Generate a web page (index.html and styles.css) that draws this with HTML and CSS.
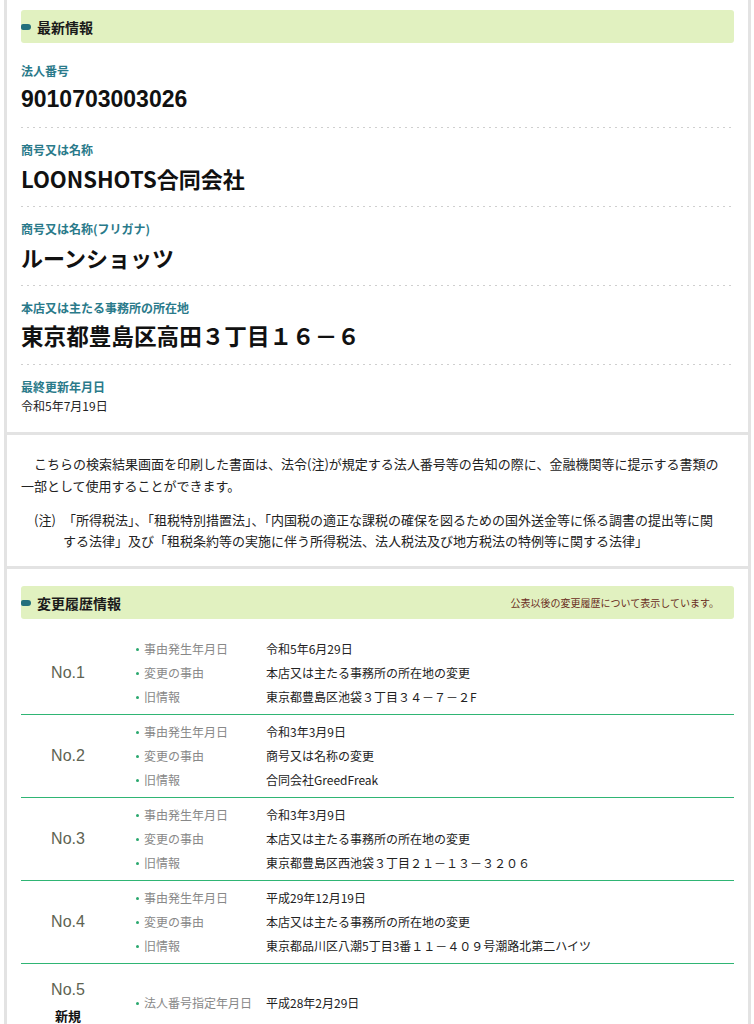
FILE: index.html
```html
<!DOCTYPE html>
<html lang="ja">
<head>
<meta charset="utf-8">
<title>法人番号</title>
<link rel="stylesheet" href="styles.css">
</head>
<body>
<div class="wrap">
  <section class="panel latest">
    <h2 class="bar"><span class="mark"></span>最新情報</h2>
    <div class="item">
      <div class="label">法人番号</div>
      <div class="value num">9010703003026</div>
    </div>
    <div class="item">
      <div class="label">商号又は名称</div>
      <div class="value">LOONSHOTS合同会社</div>
    </div>
    <div class="item">
      <div class="label">商号又は名称(フリガナ)</div>
      <div class="value">ルーンショッツ</div>
    </div>
    <div class="item">
      <div class="label">本店又は主たる事務所の所在地</div>
      <div class="value addr">東京都豊島区高田３丁目１６－６</div>
    </div>
    <div class="item last">
      <div class="label">最終更新年月日</div>
      <div class="small">令和5年7月19日</div>
    </div>
  </section>

  <section class="panel notice">
    <p class="lead">こちらの検索結果画面を印刷した書面は、法令(注)が規定する法人番号等の告知の際に、金融機関等に提示する書類の一部として使用することができます。</p>
    <div class="note">
      <span class="note-mark">(注)</span>
      <p class="note-text">「所得税法」、「租税特別措置法」、「内国税の適正な課税の確保を図るための国外送金等に係る調書の提出等に関する法律」及び「租税条約等の実施に伴う所得税法、法人税法及び地方税法の特例等に関する法律」</p>
    </div>
  </section>

  <section class="panel history">
    <h2 class="bar"><span class="mark"></span>変更履歴情報<span class="bar-note">公表以後の変更履歴について表示しています。</span></h2>

    <div class="row">
      <div class="no">No.1</div>
      <ul class="facts">
        <li><span class="k">事由発生年月日</span><span class="v">令和5年6月29日</span></li>
        <li><span class="k">変更の事由</span><span class="v">本店又は主たる事務所の所在地の変更</span></li>
        <li><span class="k">旧情報</span><span class="v">東京都豊島区池袋３丁目３４－７－２F</span></li>
      </ul>
    </div>
    <div class="row">
      <div class="no">No.2</div>
      <ul class="facts">
        <li><span class="k">事由発生年月日</span><span class="v">令和3年3月9日</span></li>
        <li><span class="k">変更の事由</span><span class="v">商号又は名称の変更</span></li>
        <li><span class="k">旧情報</span><span class="v">合同会社GreedFreak</span></li>
      </ul>
    </div>
    <div class="row">
      <div class="no">No.3</div>
      <ul class="facts">
        <li><span class="k">事由発生年月日</span><span class="v">令和3年3月9日</span></li>
        <li><span class="k">変更の事由</span><span class="v">本店又は主たる事務所の所在地の変更</span></li>
        <li><span class="k">旧情報</span><span class="v">東京都豊島区西池袋３丁目２１－１３－３２０６</span></li>
      </ul>
    </div>
    <div class="row">
      <div class="no">No.4</div>
      <ul class="facts">
        <li><span class="k">事由発生年月日</span><span class="v">平成29年12月19日</span></li>
        <li><span class="k">変更の事由</span><span class="v">本店又は主たる事務所の所在地の変更</span></li>
        <li><span class="k">旧情報</span><span class="v">東京都品川区八潮5丁目3番１１－４０９号潮路北第二ハイツ</span></li>
      </ul>
    </div>
    <div class="row first">
      <div class="no">No.5<span class="new">新規</span></div>
      <ul class="facts">
        <li><span class="k">法人番号指定年月日</span><span class="v">平成28年2月29日</span></li>
      </ul>
    </div>
  </section>
</div>
</body>
</html>
```

FILE: styles.css
```css
* { box-sizing: border-box; }
html, body { margin: 0; padding: 0; background: #fff; }
body {
  font-family: "Noto Sans CJK JP", "Liberation Sans", sans-serif;
  color: #222;
}
.wrap {
  margin-left: 4px;
  width: 747px;
  background: #e3e3e3;
  padding: 0 3px;
  display: flex;
  flex-direction: column;
  gap: 3px;
}
.panel {
  background: #fff;
  padding: 10px 14px 0;
}
.bar {
  margin: 0;
  height: 33px;
  background: #e1f1c0;
  border-radius: 3px;
  display: flex;
  align-items: center;
  font-size: 14px;
  font-weight: 700;
  color: #1a1a1a;
  line-height: 1;
}
.mark {
  width: 10px;
  height: 6px;
  background: #236f7c;
  border-radius: 2px 3px 3px 2px;
  margin-right: 6px;
  flex: none;
}
.latest { padding-bottom: 17px; }
.latest .bar { margin-bottom: 6px; }
.item {
  padding: 14px 0;
  background-image: linear-gradient(to right, #cfcfcf 2px, transparent 2px);
  background-size: 6px 1px;
  background-repeat: repeat-x;
  background-position: 0 100%;
}
.item.last { background: none; padding-bottom: 0; }
.label {
  font-size: 12px;
  line-height: 16px;
  font-weight: 700;
  color: #2a7a8a;
}
.value {
  margin-top: 5px;
  font-size: 22px;
  line-height: 30px;
  font-weight: 700;
  color: #111;
}
.value.num { font-family: "Liberation Sans", sans-serif; font-size: 23px; }
.value.addr { font-size: 22.6px; }
.small {
  margin-top: 2px;
  font-size: 12px;
  line-height: 18px;
  color: #222;
}

.notice { padding: 18px 28px 15px 14px; }
.lead {
  margin: 0;
  font-size: 13px;
  line-height: 22px;
  text-indent: 13px;
  color: #222;
}
.note {
  display: flex;
  margin-top: 12px;
  font-size: 13px;
  line-height: 21px;
  color: #222;
}
.note-mark { width: 42px; padding-left: 13px; flex: none; }
.note-text { margin: 0; flex: 1; }

.history { padding-top: 17px; }
.history .bar { margin-bottom: 13px; }
.bar-note {
  margin-left: auto;
  margin-right: 15px;
  font-size: 10px;
  font-weight: 400;
  color: #6a2d22;
}
.row {
  display: flex;
  align-items: center;
  border-bottom: 1px solid #2fb574;
  padding: 5px 0;
}
.row.first { border-bottom: none; padding-top: 17px; }
.no {
  width: 94px;
  flex: none;
  text-align: center;
  font-family: "Liberation Sans", sans-serif;
  font-size: 16px;
  color: #5e6352;
  display: flex;
  flex-direction: column;
  align-items: center;
}
.new {
  font-family: "Noto Sans CJK JP", sans-serif;
  font-size: 13px;
  font-weight: 700;
  color: #111;
  margin-top: 7px;
}
.facts {
  list-style: none;
  margin: 0 0 0 21px;
  padding: 0;
  font-size: 12px;
  line-height: 24px;
}
.facts li { display: flex; align-items: center; }
.facts li::before {
  content: "";
  width: 3px;
  height: 3px;
  border-radius: 50%;
  background: #2aa86e;
  margin-right: 5px;
  flex: none;
}
.k { width: 122px; color: #888; flex: none; }
.v { color: #222; }
```
